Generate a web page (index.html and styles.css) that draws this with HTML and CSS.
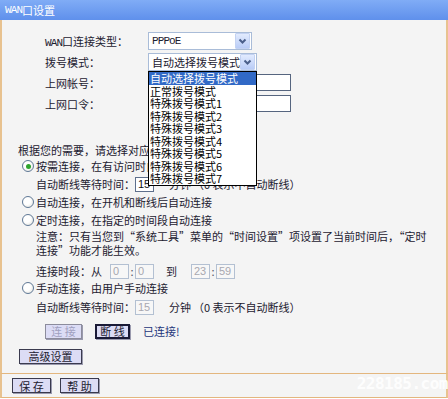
FILE: index.html
```html
<!DOCTYPE html>
<html lang="zh-CN">
<head>
<meta charset="utf-8">
<title>WAN口设置</title>
<link rel="stylesheet" href="styles.css">
</head>
<body>
<div class="page">
  <div class="header"><span class="latin">WAN</span>口设置</div>
  <div class="main">
    <div class="form">
      <div class="label"><span class="latin">WAN</span>口连接类型：</div>
      <div class="select s1"><span class="val latin">PPPoE</span><span class="arrow"><svg width="13" height="14" viewBox="0 0 13 14"><path d="M3.5 5.5l3 3 3-3" fill="none" stroke="#4a5f8a" stroke-width="2"/></svg></span></div>
      <div class="label">拨号模式：</div>
      <div class="select s2"><span class="val">自动选择拨号模式</span><span class="arrow"><svg width="13" height="14" viewBox="0 0 13 14"><path d="M3.5 5.5l3 3 3-3" fill="none" stroke="#4a5f8a" stroke-width="2"/></svg></span></div>
      <div class="label">上网帐号：</div>
      <div class="input"></div>
      <div class="label">上网口令：</div>
      <div class="input"></div>
    </div>

    <p class="intro">根据您的需要，请选择对应的连接模式：</p>

    <div class="line opt h18"><span class="radio on"></span>按需连接，在有访问时自动连接</div>
    <div class="line sub h18">自动断线等待时间：<span class="box">15</span><span class="unit">分钟</span>（0 表示不自动断线）</div>
    <div class="line opt h18"><span class="radio"></span>自动连接，在开机和断线后自动连接</div>
    <div class="line opt h17"><span class="radio"></span>定时连接，在指定的时间段自动连接</div>
    <p class="note">注意：只有当您到“系统工具”菜单的“时间设置”项设置了当前时间后，“定时<br>连接”功能才能生效。</p>
    <div class="line sub period">连接时段：从<span class="box dis b-from">0</span><span class="colon">:</span><span class="box dis">0</span><span class="to">到</span><span class="box dis">23</span><span class="colon">:</span><span class="box dis">59</span></div>
    <div class="line opt h14"><span class="radio"></span>手动连接，由用户手动连接</div>
    <div class="line sub h24">自动断线等待时间：<span class="box dis">15</span><span class="unit">分钟</span>（0 表示不自动断线）</div>

    <div class="actions">
      <button class="btn dis w37">连 接</button>
      <button class="btn focus w35">断 线</button>
      <span class="status">已连接!</span>
    </div>
    <div class="adv"><button class="btn w63">高级设置</button></div>

    <ul class="dropdown">
      <li class="sel">自动选择拨号模式</li>
      <li>正常拨号模式</li>
      <li>特殊拨号模式1</li>
      <li>特殊拨号模式2</li>
      <li>特殊拨号模式3</li>
      <li>特殊拨号模式4</li>
      <li>特殊拨号模式5</li>
      <li>特殊拨号模式6</li>
      <li>特殊拨号模式7</li>
    </ul>
  </div>
  <div class="footer">
    <button class="btn w39">保 存</button>
    <button class="btn w39">帮 助</button>
    <span class="mark">228185.com</span>
  </div>
</div>
</body>
</html>
```
FILE: styles.css
```css
body {
  margin: 0;
  background: #ffffff;
  font-family: "Noto Sans CJK SC", "Noto Sans", sans-serif;
  font-size: 11px;
  color: #1c2030;
}
.page {
  width: 448px;
}
.latin {
  font-family: "Liberation Mono", monospace;
  font-size: 11px;
  letter-spacing: -0.9px;
}
.header {
  height: 20px;
  box-sizing: border-box;
  background: linear-gradient(#80acf6, #5f90ec);
  color: #ffffff;
  display: flex;
  align-items: center;
  padding-left: 5px;
}
.main {
  position: relative;
  height: 353px;
  box-sizing: border-box;
  border-left: 2px solid #e8c28f;
  border-right: 2px solid #e8c28f;
  background: #f4f4f4;
  padding-top: 10px;
}
.form {
  margin-left: 43px;
  display: grid;
  grid-template-columns: 103px auto;
  grid-auto-rows: 21px;
  align-items: center;
  justify-items: start;
}
.select {
  display: flex;
  align-items: center;
  height: 18px;
  box-sizing: border-box;
  border: 1px solid #a9bcd8;
  background: #ffffff;
  padding-right: 1px;
}
.s1 { width: 104px; }
.s2 { width: 109px; }
.select .val {
  flex: 1;
  padding-left: 3px;
  white-space: nowrap;
  overflow: hidden;
}
.arrow {
  width: 13px;
  height: 14px;
  display: flex;
  border: 1px solid #c3d2f2;
  border-radius: 1px;
  background: linear-gradient(#e2ebfe, #b9ccf7);
}
.input {
  width: 143px;
  height: 17px;
  box-sizing: border-box;
  border: 1px solid #56657f;
  background: #ffffff;
}
.intro {
  margin: 29px 0 0 16px;
  line-height: 14px;
  height: 14px;
}
.line {
  display: flex;
  align-items: center;
  white-space: nowrap;
}
.opt { padding-left: 20px; }
.sub { padding-left: 34px; }
.h14 { height: 14px; }
.h17 { height: 17px; }
.h18 { height: 18px; }
.h24 { height: 24px; }
.period {
  height: 20px;
  margin-top: 4px;
}
.radio {
  width: 12px;
  height: 12px;
  box-sizing: border-box;
  border-radius: 50%;
  border: 1px solid #5f7896;
  background: radial-gradient(circle at 40% 40%, #ffffff 40%, #dcdcd6);
  margin-right: 2px;
  display: flex;
  align-items: center;
  justify-content: center;
}
.radio.on::after {
  content: "";
  width: 5px;
  height: 5px;
  border-radius: 50%;
  background: #2ea52e;
}
.box {
  display: inline-flex;
  align-items: center;
  width: 19px;
  height: 15px;
  box-sizing: border-box;
  border: 1px solid #5e6f8c;
  background: #ffffff;
  padding-left: 2px;
  font-family: "Liberation Sans", sans-serif;
  font-size: 11px;
  color: #111111;
}
.box.dis {
  border-color: #b3c0d2;
  background: #f7f7f7;
  color: #a8a8b0;
}
.b-from { margin-left: 8px; }
.colon {
  width: 6px;
  text-align: center;
  color: #555566;
}
.to {
  margin: 0 14px 0 12px;
}
.unit { margin-left: 15px; margin-right: 2px; }
.note {
  margin: 2px 0 0;
  padding-left: 34px;
  line-height: 13.5px;
  white-space: nowrap;
}
.btn {
  display: inline-flex;
  align-items: center;
  justify-content: center;
  height: 15px;
  box-sizing: border-box;
  padding: 0;
  border: 1px solid #3a3a4e;
  background: #dcdcf5;
  box-shadow: 1px 1px 0 #9a9aae;
  font-family: "Noto Sans CJK SC", sans-serif;
  font-size: 11px;
  color: #1c2030;
}
.btn.dis {
  border-color: #8c8c9c;
  color: #a0a0c0;
}
.btn.focus {
  border: 2px solid #1a1a36;
}
.w35 { width: 35px; }
.w37 { width: 37px; }
.w39 { width: 39px; }
.w63 { width: 63px; }
.actions {
  height: 24px;
  display: flex;
  align-items: center;
  gap: 13px;
  padding-left: 43px;
}
.status { color: #24347a; }
.adv {
  height: 26px;
  display: flex;
  align-items: center;
  padding-left: 17px;
}
.dropdown {
  position: absolute;
  left: 146px;
  top: 51px;
  width: 109px;
  box-sizing: border-box;
  margin: 0;
  padding: 0;
  list-style: none;
  border: 1px solid #000000;
  background: #ffffff;
  color: #000000;
}
.dropdown li {
  height: 12.5px;
  line-height: 12.5px;
  padding-left: 1px;
  white-space: nowrap;
}
.dropdown li.sel {
  background: #3169c6;
  color: #ffffff;
}
.footer {
  position: relative;
  height: 25px;
  box-sizing: border-box;
  border-style: solid;
  border-color: #e3b67e #e8c28f;
  border-width: 1px 2px;
  background: #f4f4f4;
  display: flex;
  align-items: center;
  gap: 9px;
  padding-left: 10px;
}
.mark {
  position: absolute;
  right: -2px;
  top: 0;
  font-family: "DejaVu Sans Mono", monospace;
  font-weight: bold;
  font-size: 16px;
  letter-spacing: -0.5px;
  color: rgba(255, 255, 255, 0.92);
}
```
